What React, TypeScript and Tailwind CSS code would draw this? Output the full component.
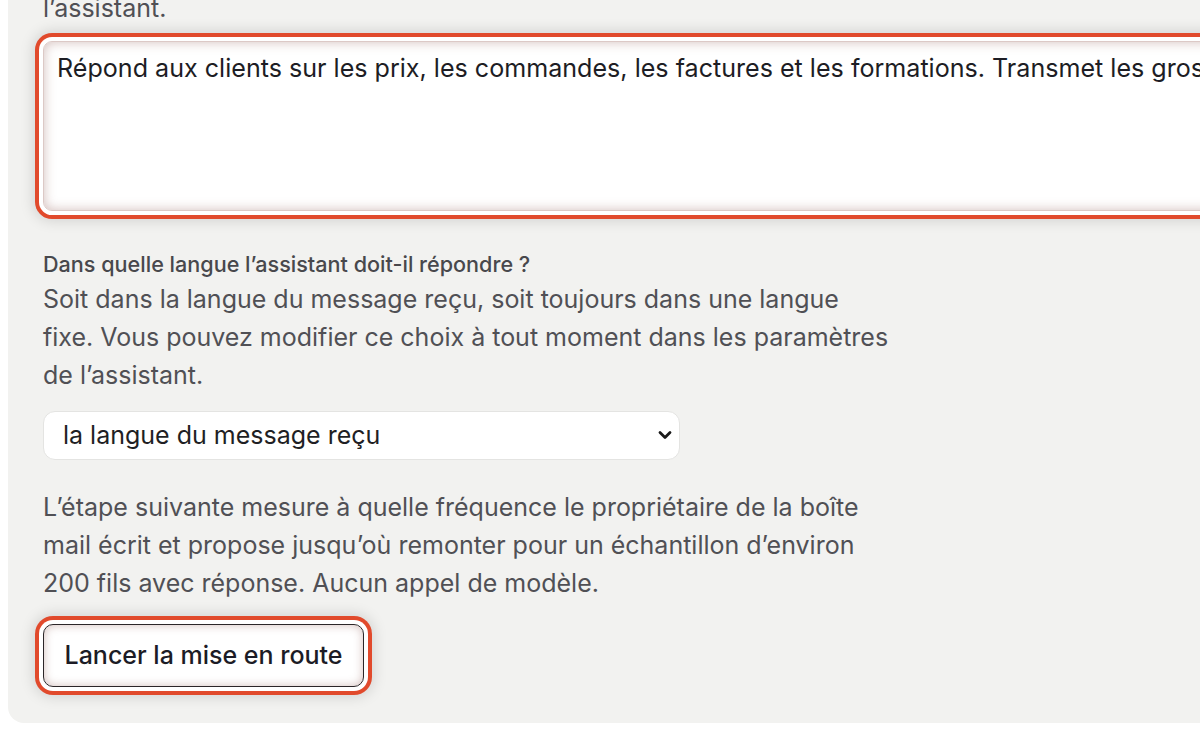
import React from "react";

export default function App() {
  return (
    <div
      className="w-[1200px] h-[750px] overflow-hidden bg-white"
      style={{ fontFamily: "Inter, 'Noto Sans', sans-serif" }}
    >
      <div className="ml-[8px] mt-[-59px] w-[1400px] rounded-bl-[16px] bg-[#f2f2f0] pl-[35px] pr-[35px] pb-[32px] pt-[10px]">
        <p className="text-[25px] leading-[38px] text-[#505055] whitespace-nowrap">
          Décrivez en une phrase ce que fait l’assistant, il sera repris dans les réglages de
          <br />
          l’assistant.
        </p>
        <div className="ml-[-4px] mt-[10px] w-[1500px] rounded-[13px] p-[4px] shadow-[0_0_0_4px_#e14a2c,0_0_14px_6px_rgba(0,0,0,0.13)] bg-white">
          <textarea
            className="block h-[170px] w-full resize-none rounded-[9px] border border-[#dcc9c6] bg-white px-[13px] pt-[12px] text-[25.1px] leading-[28px] text-[#1d1d24] outline-none shadow-[inset_0_0_12px_rgba(130,70,60,0.35)]"
            defaultValue="Répond aux clients sur les prix, les commandes, les factures et les formations. Transmet les gros dossiers à l’équipe."
          />
        </div>
        <div className="mt-[36px] text-[21.6px] leading-[26px] font-medium text-[#48484c]">
          Dans quelle langue l’assistant doit-il répondre ?
        </div>
        <p className="mt-[3px] w-[850px] text-[25px] leading-[38px] text-[#505055]">
          Soit dans la langue du message reçu, soit toujours dans une langue fixe. Vous pouvez
          modifier ce choix à tout moment dans les paramètres de l’assistant.
        </p>
        <div className="relative mt-[17px] w-[637px]">
          <select className="block h-[49px] w-full appearance-none rounded-[12px] border border-[#e4e4e2] bg-white pl-[19px] text-[25px] text-[#1f1f24] outline-none">
            <option>la langue du message reçu</option>
            <option>une langue fixe</option>
          </select>
          <svg
            className="pointer-events-none absolute right-[8px] top-[18px]"
            width="14"
            height="12"
            viewBox="0 0 14 12"
          >
            <path d="M2 3.5l5 5 5-5" fill="none" stroke="#1a1a1a" strokeWidth="2.8" strokeLinecap="round" strokeLinejoin="round" />
          </svg>
        </div>
        <p className="mt-[28px] w-[850px] text-[25px] leading-[38px] text-[#505055]">
          L’étape suivante mesure à quelle fréquence le propriétaire de la boîte mail écrit et
          propose jusqu’où remonter pour un échantillon d’environ 200 fils avec réponse.
          Aucun appel de modèle.
        </p>
        <div className="ml-[-4px] mt-[18px] w-fit rounded-[14px] bg-white p-[4px] shadow-[0_0_0_4px_#e14a2c,0_0_14px_6px_rgba(0,0,0,0.13)]">
          <button className="block h-[63px] w-[321px] rounded-[10px] border border-[#2b2628] bg-white text-[25px] font-medium text-[#1c1c26] shadow-[inset_0_0_10px_rgba(130,70,60,0.35)]">
            Lancer la mise en route
          </button>
        </div>
      </div>
    </div>
  );
}
